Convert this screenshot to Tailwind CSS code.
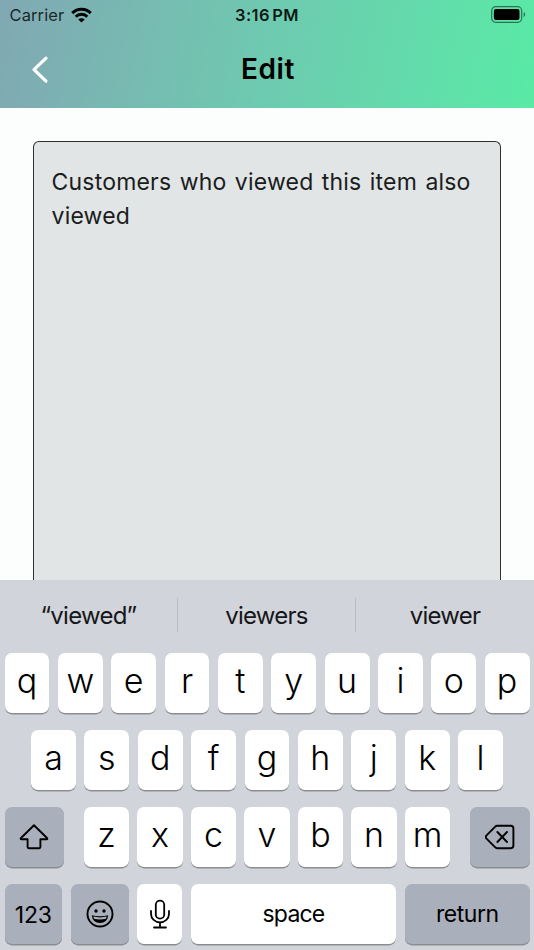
<!DOCTYPE html>
<html lang="en">
<head>
<meta charset="utf-8">
<title>Edit</title>
<script src="https://cdn.jsdelivr.net/npm/@tailwindcss/browser@4"></script>
</head>
<body class="w-[534px] h-[950px] overflow-hidden bg-[#fcfefd] font-['Inter','Liberation_Sans',sans-serif] text-black flex flex-col">
<header class="h-[108px] shrink-0 bg-[linear-gradient(101deg,#81a8b3_0%,#6ecab0_50%,#59eaa6_100%)]">
  <div class="h-[30px] grid grid-cols-3 items-center px-[9.5px]">
    <div class="flex items-center gap-[8px] text-[16.5px] leading-[30px] text-black/80">
      <span class="tracking-[0.1px]">Carrier</span>
      <svg class="w-[21px] h-[16px] -ml-[1px]" viewBox="0 0 21 16" fill="none" stroke="#000" stroke-width="3"><path d="M1.2 6.1a13.3 13.3 0 0 1 18.6 0M4.7 9.7a8.2 8.2 0 0 1 11.6 0"/><path d="M10.5 15.6 7.3 12.5a4.6 4.6 0 0 1 6.4 0Z" fill="#000" stroke="none"/></svg>
    </div>
    <div class="text-center text-[16.5px] leading-[30px] font-[560] tracking-[0.35px] [word-spacing:-2px] text-black/90">3:16 PM</div>
    <div class="flex justify-end items-center pb-[2px] -mr-[1.5px]">
      <svg class="w-[35px] h-[17px]" viewBox="0 0 35 17"><rect x=".7" y=".7" width="30" height="15.6" rx="4" fill="none" stroke="#000" stroke-opacity=".5" stroke-width="1.2"/><rect x="2.9" y="3" width="25.6" height="11" rx="2" fill="#000"/><path d="M32.7 6v5c2-1 2-4 0-5Z" fill="#000" fill-opacity=".5"/></svg>
    </div>
  </div>
  <div class="h-[78px] grid grid-cols-3 items-center">
    <svg class="w-[18px] h-[30px] ml-[31px]" viewBox="0 0 18 30" fill="none" stroke="#fff" stroke-width="3.2" stroke-linecap="round" stroke-linejoin="round"><path d="M15 3.1 3 14.6 15 26.2"/></svg>
    <h1 class="text-center text-[28px] leading-[79px] font-[570] tracking-[0.6px] pl-[2px]">Edit</h1>
  </div>
</header>
<main class="h-[471.5px] shrink-0 px-[33px] pt-[33px] flex overflow-hidden">
  <div class="flex-1 rounded-t-[6px] border-[1.4px] border-b-0 border-[#2e3031] bg-[#e1e5e6] pt-[23px] pl-[17.5px] text-[23px] leading-[34px] tracking-[0.2px] [word-spacing:1.7px] text-[#1b1c1c] font-[370] whitespace-nowrap">Customers who viewed this item also<br>viewed</div>
</main>
<section class="h-[370.5px] shrink-0 bg-[#d1d4da] flex flex-col">
  <div class="h-[71px] flex items-center text-center text-[24px] leading-[36px] tracking-[-0.75px] text-[#161719]">
    <div class="w-[177px] pt-[1px]">“viewed”</div>
    <div class="w-[179px] h-[34px] border-x border-[#b9bcc2]">viewers</div>
    <div class="flex-1 pt-[1px]">viewer</div>
  </div>
  <div class="flex flex-col gap-[17px] pt-[2.7px] px-[4.5px] text-[34px] font-[350] text-center leading-[56px] *:flex *:h-[60px] *:*:rounded-[7px] *:*:shadow-[0_1.4px_0_#8b8d91]">
    <div class="gap-[8.4px] *:flex-1 *:bg-white">
      <div>q</div><div>w</div><div>e</div><div>r</div><div>t</div><div>y</div><div>u</div><div>i</div><div>o</div><div>p</div>
    </div>
    <div class="gap-[8.4px] px-[26.5px] *:flex-1 *:bg-white">
      <div>a</div><div>s</div><div>d</div><div>f</div><div>g</div><div>h</div><div>j</div><div>k</div><div>l</div>
    </div>
    <div class="gap-[8.4px] *:bg-white">
      <div class="w-[59.5px] mr-[11.5px] !bg-[#a9b0bb] flex items-center justify-center"><svg class="w-[30px] h-[28px]" viewBox="0 0 30 28" fill="none" stroke="#000" stroke-width="1.9" stroke-linejoin="round"><path d="M15 2.2 28 15Q29 16.3 27.4 16.3H21.4V24Q21.4 25.2 20.2 25.2H9.8Q8.6 25.2 8.6 24V16.3H2.6Q1 16.3 2 15Z"/></svg></div>
      <div class="flex-1">z</div><div class="flex-1">x</div><div class="flex-1">c</div><div class="flex-1">v</div><div class="flex-1">b</div><div class="flex-1">n</div><div class="flex-1">m</div>
      <div class="w-[59.5px] ml-[11.5px] !bg-[#a9b0bb] flex items-center justify-center"><svg class="w-[30px] h-[26px]" viewBox="0 0 30 26" fill="none" stroke="#000" stroke-width="1.9" stroke-linejoin="round" stroke-linecap="round"><path d="M12.2 1.8H25.8Q28.4 1.8 28.4 4.4V21.6Q28.4 24.2 25.8 24.2H12.2Q10.9 24.2 10 23.2L1.3 14.3Q.2 13 1.3 11.7L10 2.8Q10.9 1.8 12.2 1.8ZM12.4 8 22 18M22 8 12.4 18"/></svg></div>
    </div>
    <div class="gap-[8.6px] text-[23px] font-normal leading-[60px]">
      <div class="w-[57.5px] bg-[#a9b0bb] tracking-[-0.2px] leading-[62px]">123</div>
      <div class="w-[58px] bg-[#a9b0bb] flex items-center justify-center"><svg class="w-[28px] h-[28px]" viewBox="0 0 28 28"><circle cx="14" cy="14" r="12.5" fill="none" stroke="#000" stroke-width="1.9"/><circle cx="10" cy="11" r="1.7"/><circle cx="18" cy="11" r="1.7"/><path d="M5.8 15.2Q14 17.2 22.2 15.2 21.4 23 14 23T5.8 15.2Z"/><path d="M7.4 16.6Q14 18.2 20.6 16.6L20 18.8Q14 20.4 8 18.8Z" fill="#a9b0bb"/></svg></div>
      <div class="w-[44.8px] bg-white flex items-center justify-center"><svg class="w-[22px] h-[30px]" viewBox="0 0 22 30" fill="none" stroke="#000" stroke-width="1.8" stroke-linecap="round"><rect x="6.8" y="1.6" width="8.4" height="18" rx="4.2"/><path d="M2 12v3a9 8.3 0 0 0 18 0v-3M11 23.3v5.2M5 28.5h12"/></svg></div>
      <div class="flex-1 bg-white tracking-[-0.8px]">space</div>
      <div class="w-[124.5px] bg-[#a9b0bb] tracking-[-0.45px]">return</div>
    </div>
  </div>
</section>
</body>
</html>
